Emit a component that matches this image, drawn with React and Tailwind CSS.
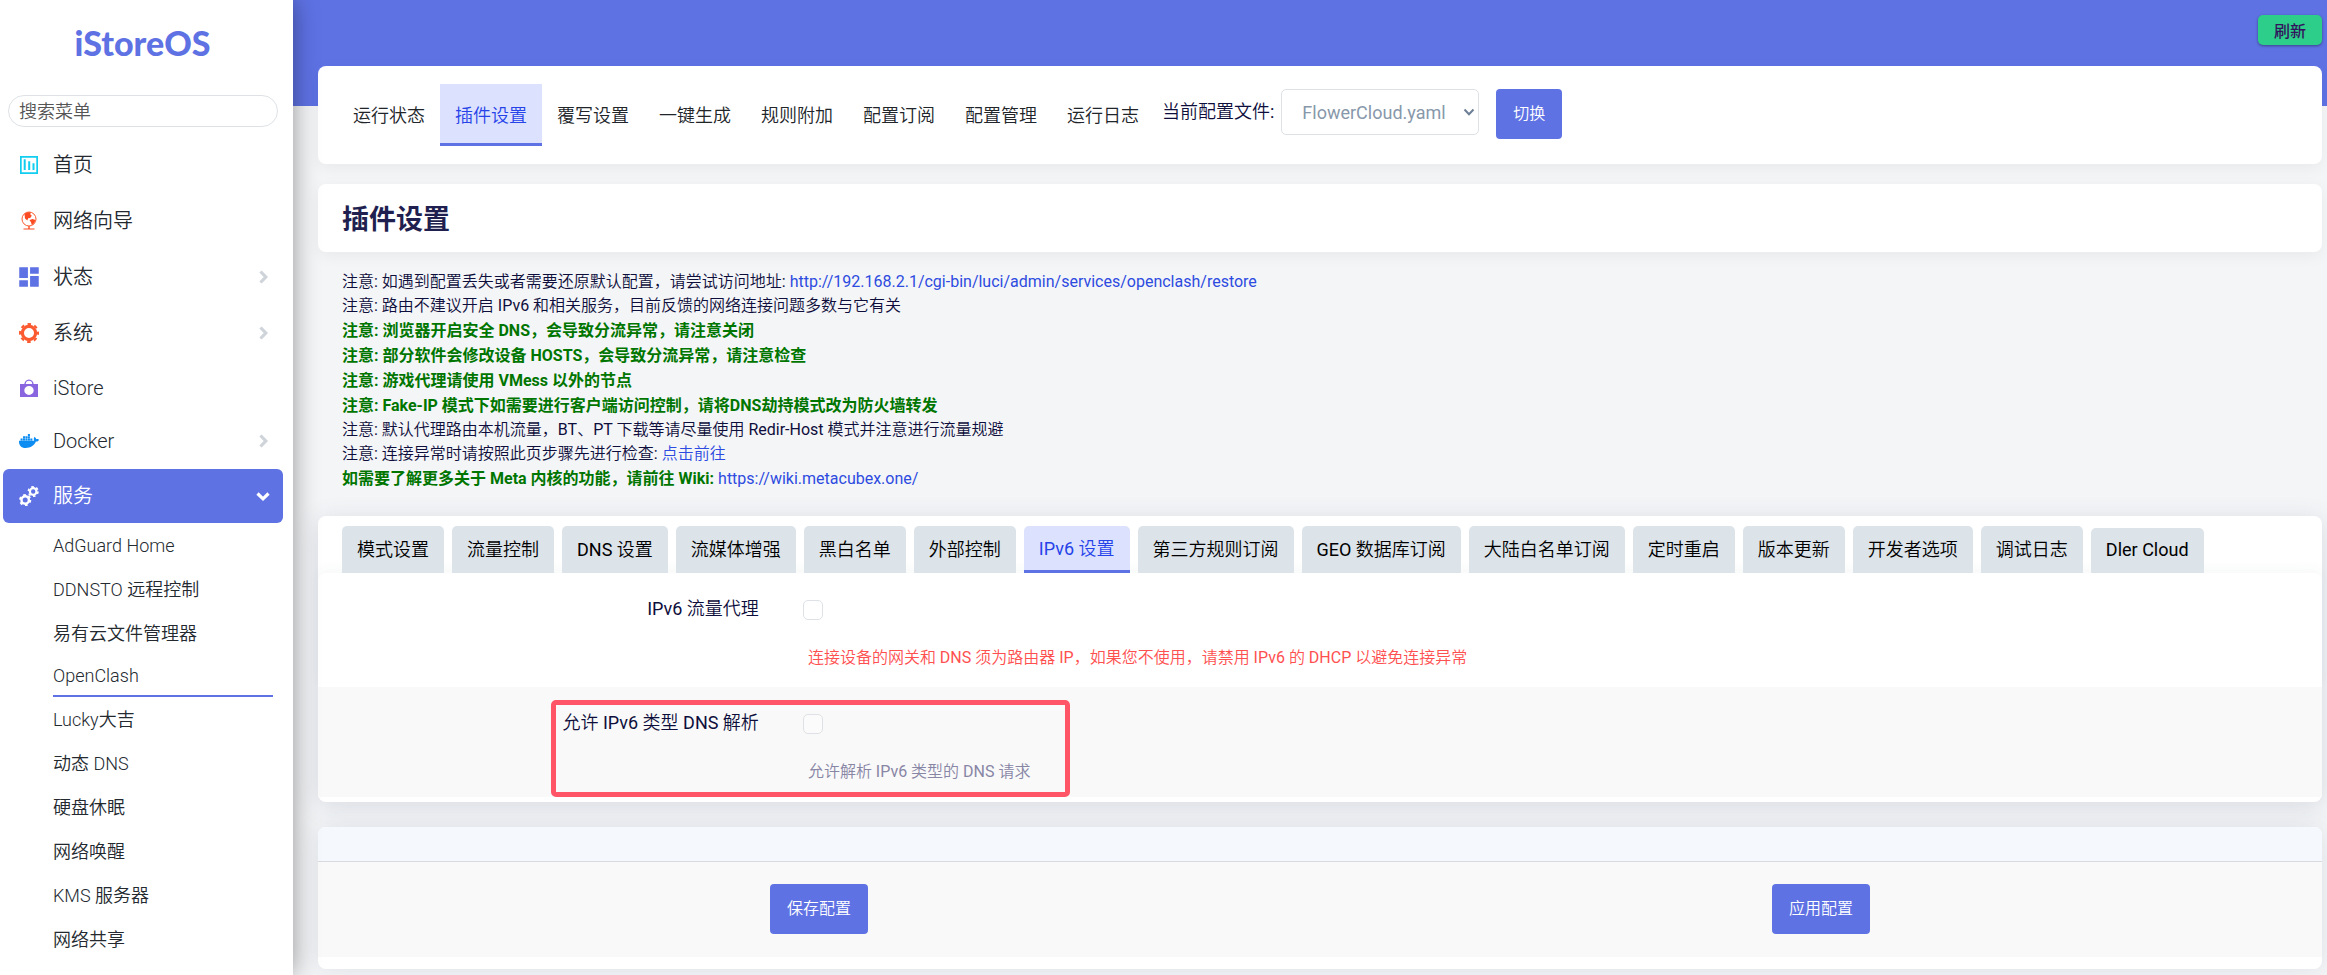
import { FaDocker } from 'react-icons/fa'
import { MdDashboard } from 'react-icons/md'

function ChartIcon() {
  return (
    <svg width="20" height="20" viewBox="0 0 20 20" fill="#11cdef">
      <path d="M1 1h18v18H1zM2.700 2.700v14.600h14.600V2.700z" fillRule="evenodd" />
      <path d="M4.700 4.300h2v10.700h-2zM9.200 6.300h2V15h-2zM13.500 8.300h2V15h-2z" />
    </svg>
  )
}

function GlobeIcon() {
  return (
    <svg width="20" height="20" viewBox="0 0 20 20">
      <circle cx="10" cy="8" r="7" fill="none" stroke="#fb5a30" strokeWidth="1" />
      <path d="M5.500 3C7 1.500 9.500.900 12 1.500l-.8 1.800 1.600 1.500-1.600 2.200-2 .2-.9 2.300-2.300-2zM10.500 9l3.200-1 2.600 1c-.4 2.400-1.600 4-3.600 5.100l-.6-2.600z" fill="#fb4b23" />
      <path d="M9.300 15h1.400v2.400h4.800v1.200h-11v-1.200h4.800z" fill="#fb4b23" />
    </svg>
  )
}

function GearIcon() {
  return (
    <svg width="20" height="20" viewBox="0 0 20 20" fill="none" stroke="#fb5a30">
      <circle cx="10" cy="10" r="6.600" strokeWidth="3.200" />
      <circle cx="10" cy="10" r="9" strokeWidth="2" strokeDasharray="3.600 3.469" strokeDashoffset="1.800" />
    </svg>
  )
}

function BagIcon() {
  return (
    <svg width="20" height="20" viewBox="0 0 20 20">
      <path d="M1 6h18v13H1zM10 7.900a4.700 4.500 0 1 0 0 9 4.700 4.500 0 0 0 0-9z" fill="#8965e0" fillRule="evenodd" />
      <path d="M6 6.500a4 4.400 0 0 1 8 0" fill="none" stroke="#8965e0" strokeWidth="1.400" />
    </svg>
  )
}

function CogsIcon() {
  return (
    <svg width="20" height="22" viewBox="0 0 20 22" fill="none" stroke="currentColor">
      <circle cx="6.200" cy="15" r="3.700" strokeWidth="2.400" />
      <circle cx="6.200" cy="15" r="5.200" strokeWidth="1.800" strokeDasharray="2.700 2.745" />
      <circle cx="14.200" cy="6.500" r="3.300" strokeWidth="2.200" />
      <circle cx="14.200" cy="6.500" r="4.800" strokeWidth="1.600" strokeDasharray="2.500 2.527" />
    </svg>
  )
}

function Chevron({ down, className = '' }) {
  return (
    <svg width="14" height="14" viewBox="0 0 14 14" fill="none" stroke="currentColor" strokeWidth="3.200" className={className}>
      <path d={down ? 'M1.500 4.500 7 9.800l5.500-5.300' : 'M4.500 1.500 9.800 7l-5.300 5.500'} />
    </svg>
  )
}

const menu = [
  { title: '首页', icon: <ChartIcon />, height: 'h-[54px]' },
  { title: '网络向导', icon: <GlobeIcon />, height: 'h-[54px]' },
  { title: '状态', icon: <MdDashboard className="size-[26px] -m-[3px] shrink-0 text-[#5e72e4]" />, height: 'h-[54px]', arrow: true },
  { title: '系统', icon: <GearIcon />, height: 'h-[54px]', arrow: true },
  { title: 'iStore', icon: <BagIcon />, height: 'h-[51px]' },
  { title: 'Docker', icon: <FaDocker className="size-5 text-[#0d8df2]" />, height: 'h-[52px]', arrow: true },
]

const services = [
  { title: 'AdGuard Home' },
  { title: 'DDNSTO 远程控制' },
  { title: '易有云文件管理器' },
  { title: 'OpenClash', active: true },
  { title: 'Lucky大吉' },
  { title: '动态 DNS' },
  { title: '硬盘休眠' },
  { title: '网络唤醒' },
  { title: 'KMS 服务器' },
  { title: '网络共享' },
]

const pages = ['运行状态', '插件设置', '覆写设置', '一键生成', '规则附加', '配置订阅', '配置管理', '运行日志']

const notices = [
  { text: '注意: 如遇到配置丢失或者需要还原默认配置，请尝试访问地址: ', link: 'http://192.168.2.1/cgi-bin/luci/admin/services/openclash/restore' },
  { text: '注意: 路由不建议开启 IPv6 和相关服务，目前反馈的网络连接问题多数与它有关' },
  { text: '注意: 浏览器开启安全 DNS，会导致分流异常，请注意关闭', bold: true },
  { text: '注意: 部分软件会修改设备 HOSTS，会导致分流异常，请注意检查', bold: true },
  { text: '注意: 游戏代理请使用 VMess 以外的节点', bold: true },
  { text: '注意: Fake-IP 模式下如需要进行客户端访问控制，请将DNS劫持模式改为防火墙转发', bold: true },
  { text: '注意: 默认代理路由本机流量，BT、PT 下载等请尽量使用 Redir-Host 模式并注意进行流量规避' },
  { text: '注意: 连接异常时请按照此页步骤先进行检查: ', link: '点击前往' },
  { text: '如需要了解更多关于 Meta 内核的功能，请前往 Wiki: ', link: 'https://wiki.metacubex.one/', bold: true },
]

const tabs = [
  '模式设置', '流量控制', 'DNS 设置', '流媒体增强', '黑白名单', '外部控制', 'IPv6 设置', '第三方规则订阅',
  'GEO 数据库订阅', '大陆白名单订阅', '定时重启', '版本更新', '开发者选项', '调试日志', 'Dler Cloud',
]

function Sidebar() {
  return (
    <aside className="relative z-10 w-[293px] shrink-0 bg-white font-light text-[#23292f] shadow-[0_0_24px_rgba(0,0,0,0.4)]">
      <a href="#" className="block h-[95px] pt-5 pr-2 text-center font-[Lato] text-[34px] leading-[46px] font-black text-[#5e72e4]">
        iStoreOS
      </a>
      <input
        aria-label="搜索菜单"
        placeholder="搜索菜单"
        className="ml-2 block h-8 w-[270px] rounded-full border border-[#dee2e6] px-2.5 text-[18px] placeholder:text-[#555]"
      />
      <nav className="mt-[11px] pr-2.5 pl-[3px]">
        <ul className="flex flex-col gap-0.5">
          {menu.map((m) => (
            <li key={m.title}>
              <a href="#" className={`${m.height} flex items-center pr-[13px] pl-4 text-[20px]`}>
                <span className="mr-3.5 flex w-5 justify-center">{m.icon}</span>
                {m.title}
                {m.arrow && <Chevron className="ml-auto text-[#ced4da]" />}
              </a>
            </li>
          ))}
          <li>
            <a href="#" className="flex h-[54px] items-center rounded-md bg-[#5e72e4] pr-[13px] pl-4 text-[20px] text-white">
              <span className="mr-3.5"><CogsIcon /></span>
              服务
              <Chevron down className="ml-auto" />
            </a>
            <ul className="pr-2.5 pl-[50px]">
              {services.map((s) => (
                <li key={s.title}>
                  <a href="#" className={`${s.active ? 'h-[42px] border-b-2 border-[#5e72e4]' : 'h-11'} flex items-center text-[18px]`}>
                    {s.title}
                  </a>
                </li>
              ))}
            </ul>
          </li>
        </ul>
      </nav>
    </aside>
  )
}

function Option({ id, label, children }) {
  return (
    <div className="flex">
      <label htmlFor={id} className="w-[22%] text-right text-[18px] leading-6">{label}</label>
      <div className="ml-11">
        <input id={id} type="checkbox" className="mt-[3px] block size-5 appearance-none rounded-[5px] border border-[#dee2e6] bg-white/40" />
        {children}
      </div>
    </div>
  )
}

export default function App() {
  return (
    <div className="flex min-h-screen bg-[#f4f5f7] font-[Roboto,'Noto_Sans_CJK_SC_DemiLight','Noto_Sans_CJK_SC',sans-serif] text-[#0e0e3c]">
      <Sidebar />

      <div className="min-w-0 flex-1 bg-linear-to-b from-[#5e72e4] from-[106px] to-transparent to-[106px] pr-[5px] pb-1.5 pl-[25px]">
        <header className="flex h-[66px] items-start justify-end pt-[15px]">
          <button className="h-[30px] w-16 rounded-[5px] bg-[#2dce89] font-['Noto_Sans_CJK_SC',sans-serif] text-[16px] font-medium text-[#32125d] shadow-[0_1px_3px_rgba(0,0,0,0.4)]">刷新</button>
        </header>

        {/* Plugin pages */}
        <section className="flex h-[98px] items-start rounded-lg bg-white pt-[18px] pl-5 shadow-[0_4px_16px_rgba(0,0,0,0.05)]">
          <nav className="flex text-[18px] text-[#212529]">
            {pages.map((p) => (
              <a
                key={p}
                href="#"
                className={`flex h-[62px] w-[102px] items-center justify-center ${p === '插件设置' ? 'border-b-3 border-[#5e72e4] bg-[#dce1fe] pt-[3px] text-[#2643e9]' : ''}`}
              >
                {p}
              </a>
            ))}
          </nav>
          <form className="mt-[5px] ml-2 flex items-start">
            <label htmlFor="config" className="text-[18px] leading-[46px]">当前配置文件:</label>
            <span className="relative ml-[7px]">
              <select id="config" className="h-[46px] w-[198px] appearance-none rounded-[5px] border border-[#dee2e6] px-5 text-[18px] text-[#8898aa]">
                <option>FlowerCloud.yaml</option>
              </select>
              <svg viewBox="0 0 12 12" fill="none" stroke="#6c7f96" strokeWidth="2" className="pointer-events-none absolute top-[17px] right-1 size-3">
                <path d="M1.500 3.500 6 8.200l4.500-4.700" />
              </svg>
            </span>
            <button type="button" className="ml-[17px] h-[50px] w-[66px] rounded bg-[#5e72e4] text-[16px] text-white">切换</button>
          </form>
        </section>

        <section className="mt-5 flex h-[68px] items-center rounded-lg bg-white px-6 shadow-[0_4px_16px_rgba(0,0,0,0.05)]">
          <h1 className="font-['Noto_Sans_CJK_SC',sans-serif] text-[27px] font-bold text-[#1f1f50]">插件设置</h1>
        </section>

        {/* Notices */}
        <section className="px-6 pt-[18px] text-[16px]">
          {notices.map((n) => (
            <p key={n.text} className={n.bold ? 'leading-[25px]' : 'leading-6'}>
              <span className={n.bold ? "font-[Roboto,'Noto_Sans_CJK_SC',sans-serif] font-bold text-[#007500]" : ''}>{n.text}</span>
              {n.link && <a href="#" className="text-[#2d4be0]">{n.link}</a>}
            </p>
          ))}
        </section>

        <section className="mt-[25px] rounded-lg bg-white shadow-[0_4px_24px_rgba(60,80,110,0.16)]">
          <div role="tablist" className="flex items-end gap-2 px-6 pt-2.5 text-[18px] text-black">
            {tabs.map((t) => (
              <button
                key={t}
                role="tab"
                aria-selected={t === 'IPv6 设置'}
                className={`rounded-t-[5px] px-[15px] whitespace-nowrap ${t === 'Dler Cloud' ? 'h-[45px] pb-0.5' : 'h-[47px]'} ${t === 'IPv6 设置' ? 'border-b-3 border-[#5e72e4] bg-[#dce1fe] text-[#2643e9]' : 'bg-[#dce3e9]'}`}
              >
                {t}
              </button>
            ))}
          </div>
          <div className="h-[114px] rounded-t-lg bg-white pt-6 shadow-[0_-4px_12px_rgba(60,80,110,0.04)]">
            <Option id="proxy" label="IPv6 流量代理">
              <p className="mt-[26px] ml-[5px] text-[16px] leading-6 text-[#ff5050]">
                连接设备的网关和 DNS 须为路由器 IP，如果您不使用，请禁用 IPv6 的 DHCP 以避免连接异常
              </p>
            </Option>
          </div>
          <div className="relative h-[110px] bg-[#f9f9f9] pt-6">
            <Option id="dns" label="允许 IPv6 类型 DNS 解析">
              <p className="mt-[26px] ml-[5px] text-[16px] leading-6 text-[#8886a5]">允许解析 IPv6 类型的 DNS 请求</p>
            </Option>
            {/* highlight frame */}
            <div className="pointer-events-none absolute top-[13px] left-[233px] h-[97px] w-[519px] rounded-[5px] border-5 border-[#ff5566]" />
          </div>
          <div className="h-[5px]" />
        </section>

        <section className="mt-[25px] overflow-hidden rounded-lg bg-white pb-3 shadow-[0_0_24px_rgba(60,80,110,0.12)]">
          <div className="h-[35px] border-b border-[#d8dbde] bg-[#f5f9fd]" />
          <div className="grid grid-cols-2 justify-items-center bg-[#f9f9f9] pt-[22px] pb-[23px]">
            <button className="h-[50px] w-[98px] rounded bg-[#5e72e4] text-[16px] text-white">保存配置</button>
            <button className="h-[50px] w-[98px] rounded bg-[#5e72e4] text-[16px] text-white">应用配置</button>
          </div>
        </section>
      </div>
    </div>
  )
}
